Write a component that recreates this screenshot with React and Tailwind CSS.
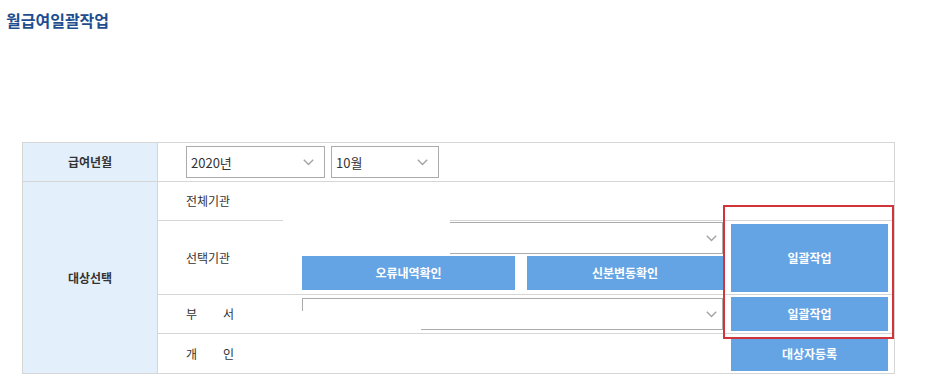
import React from 'react';

const Chevron = () => (
  <svg width="11" height="7" viewBox="0 0 11 7" fill="none">
    <path d="M0.8 0.8l4.7 4.7 4.7-4.7" stroke="#a3a3a3" strokeWidth="1.4" />
  </svg>
);

const Select = ({ value, className }) => (
  <div className={`flex h-[32px] items-center justify-between border border-[#ababab] bg-white text-[13px] text-[#333] ${className}`}>
    <span className="pl-[4px] leading-none">{value}</span>
    <Chevron />
  </div>
);

const BlueButton = ({ children, className }) => (
  <div className={`flex items-center justify-center bg-[#64a4e4] text-[12px] font-bold text-white ${className}`}>
    {children}
  </div>
);

export default function App() {
  return (
    <div className="relative h-[391px] w-[929px] bg-white font-['Noto_Sans_CJK_KR',sans-serif] text-[#333]">
      <h1 className="flex h-[40px] items-center pl-[6px] text-[16px] font-bold leading-none text-[#1f4e8e]">
        월급여일괄작업
      </h1>

      <div className="ml-[22px] mt-[102px] w-[873px] border border-[#d6d6d6]">
        {/* 급여년월 */}
        <div className="flex h-[39px] border-b border-[#d6d6d6]">
          <div className="flex w-[135px] shrink-0 items-center justify-center border-r border-[#d6d6d6] bg-[#e3effb] text-[12px] font-bold">
            급여년월
          </div>
          <div className="flex items-center gap-[6px] pl-[28px]">
            <Select value="2020년" className="w-[139px] pr-[10px]" />
            <Select value="10월" className="w-[108px] pr-[10px]" />
          </div>
        </div>

        {/* 대상선택 */}
        <div className="flex">
          <div className="flex w-[135px] shrink-0 items-center justify-center border-r border-[#d6d6d6] bg-[#e3effb] text-[12px] font-bold">
            대상선택
          </div>
          <div className="flex flex-1 flex-col text-[12px]">
            <div className="flex h-[39px] items-center border-b border-[#d6d6d6] pl-[28px]">전체기관</div>

            <div className="flex h-[74px] border-b border-[#d6d6d6]">
              <div className="flex w-[144px] shrink-0 items-center pl-[28px]">선택기관</div>
              <div className="flex w-[421px] flex-col pt-[1px]">
                <Select value="" className="w-[421px] pr-[5px]" />
                <div className="mt-[2px] flex gap-[12px]">
                  <BlueButton className="h-[34px] w-[213px]">오류내역확인</BlueButton>
                  <BlueButton className="h-[34px] flex-1">신분변동확인</BlueButton>
                </div>
              </div>
              <div className="ml-[8px] pt-[3px]">
                <BlueButton className="h-[68px] w-[157px]">일괄작업</BlueButton>
              </div>
            </div>

            <div className="flex h-[39px] items-center border-b border-[#d6d6d6]">
              <div className="flex w-[144px] shrink-0 pl-[28px]">
                <span className="w-[37px]">부</span>
                <span>서</span>
              </div>
              <Select value="" className="w-[421px] pr-[5px]" />
              <BlueButton className="ml-[8px] h-[34px] w-[157px]">일괄작업</BlueButton>
            </div>

            <div className="flex h-[39px] items-center">
              <div className="flex w-[144px] shrink-0 pl-[28px]">
                <span className="w-[37px]">개</span>
                <span>인</span>
              </div>
              <div className="w-[421px]" />
              <BlueButton className="ml-[8px] h-[34px] w-[157px]">대상자등록</BlueButton>
            </div>
          </div>
        </div>
      </div>

      {/* masked areas */}
      <div className="absolute left-[283px] top-[192px] h-[63px] w-[167px] bg-white" />
      <div className="absolute left-[300px] top-[311px] h-[21px] w-[121px] bg-white" />

      {/* highlight */}
      <div className="absolute left-[723px] top-[205px] h-[134px] w-[171px] border-2 border-[#d2343c]" />
    </div>
  );
}
